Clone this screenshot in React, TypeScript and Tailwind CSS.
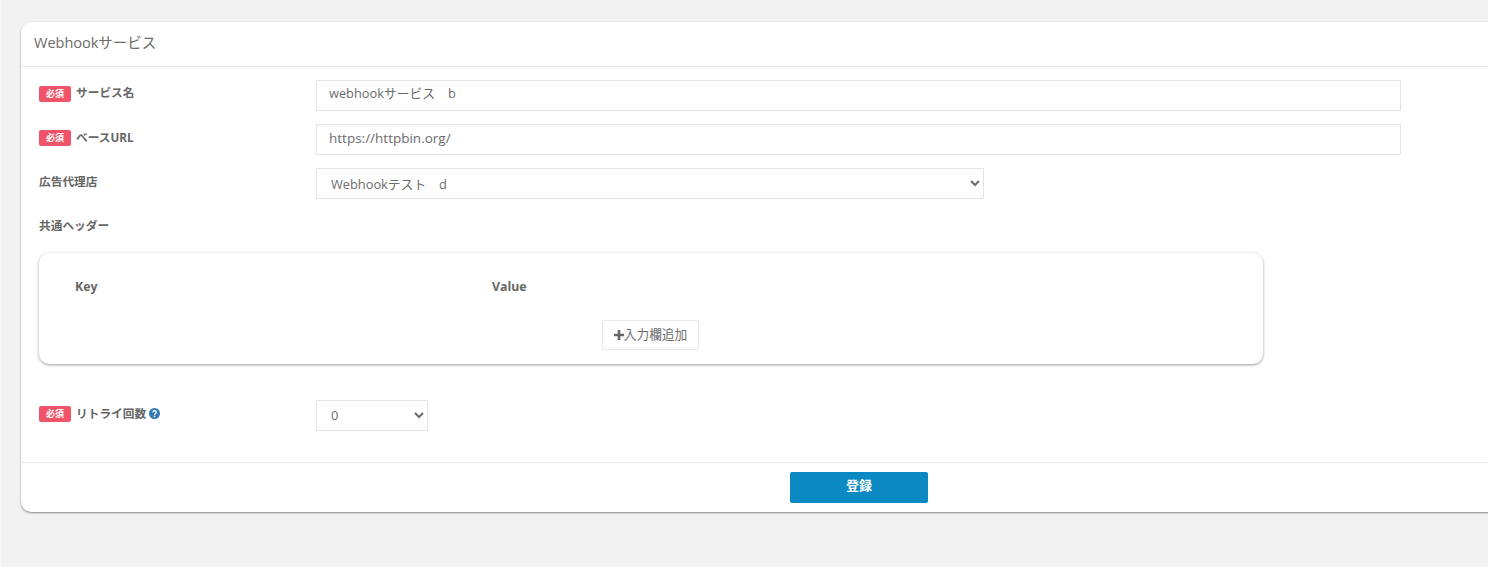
const FONT = "font-['Open_Sans','Noto_Sans_CJK_JP',sans-serif]";

function RequiredBadge() {
  return (
    <span className="inline-flex h-4 w-8 shrink-0 items-center justify-center rounded-[2px] bg-[#f15469] text-[9px] font-bold leading-none text-white">
      必須
    </span>
  );
}

function Label({ required, children }: { required?: boolean; children: React.ReactNode }) {
  return (
    <div className="flex h-[27px] w-[277px] shrink-0 items-center gap-[5px] text-[11.7px] font-bold text-[#666666]">
      {required ? <RequiredBadge /> : null}
      {children}
    </div>
  );
}

function TextField({ value, className }: { value: string; className: string }) {
  return (
    <input
      readOnly
      value={value}
      className={`h-[31px] w-[1085px] border border-[#e4e4e4] bg-white px-3 text-[#6b6b6b] outline-none ${className}`}
    />
  );
}

export default function App() {
  return (
    <div className={`h-[567px] w-[1488px] overflow-hidden border-l border-[#f8f8f8] bg-[#f2f2f2] pl-[20px] pt-[22px] ${FONT}`}>
      <div className="w-[1500px] rounded-l-[10px] bg-white shadow-[0_1px_2px_rgba(0,0,0,0.45)]">
        <div className="flex h-[45px] items-center border-b border-[#e8e8e8] pb-[3px] pl-[13px] text-[14.5px] text-[#6b6b6b]">
          Webhookサービス
        </div>

        <div className="flex flex-col pl-[18px] pt-[13px]">
          <div className="flex h-[44px] items-start">
            <Label required>
              <span className="-mt-[1px]">サービス名</span>
            </Label>
            <TextField value="webhookサービス　b" className="pb-[6px] text-[12.8px]" />
          </div>
          <div className="flex h-[44px] items-start">
            <Label required>ベースURL</Label>
            <TextField value="https://httpbin.org/" className="pb-[3px] text-[13.5px]" />
          </div>
          <div className="flex h-[44px] items-start">
            <Label>広告代理店</Label>
            <select className="h-[31px] w-[668px] border border-[#e4e4e4] bg-white px-[10px] text-[12.8px] text-[#6b6b6b] outline-none">
              <option>Webhookテスト　d</option>
            </select>
          </div>
          <Label>共通ヘッダー</Label>

          <div className="mt-[14px] w-[1224px] rounded-[10px] bg-white shadow-[0_1px_3px_rgba(0,0,0,0.4)]">
            <div className="flex h-[67px] items-end pb-[24px] pl-[36px] text-[12.3px] font-bold text-[#666666]">
              <span className="w-[417px]">Key</span>
              <span>Value</span>
            </div>
            <div className="flex h-[44px] justify-start pl-[563px]">
              <button
                type="button"
                className="flex h-[30px] w-[97px] items-center justify-center rounded-[2px] border border-[#e8e8e8] bg-white text-[12.7px] text-[#6b6b6b]"
              >
                <svg viewBox="0 0 10 10" className="h-[10px] w-[10px]" fill="#666666">
                  <path d="M3.7 0h2.6v3.7H10v2.6H6.3V10H3.7V6.3H0V3.7h3.7z" />
                </svg>
                入力欄追加
              </button>
            </div>
          </div>

          <div className="mt-[36px] flex h-[62px] items-start">
            <Label required>
              <span className="flex items-center gap-[3px]">
                リトライ回数
                <svg viewBox="0 0 24 24" className="h-[11px] w-[11px]">
                  <circle cx="12" cy="12" r="12" fill="#337ab7" />
                  <path
                    d="M8.5 9.5a3.5 3.5 0 1 1 5.3 3c-1.2.7-1.8 1.2-1.8 2.5"
                    fill="none"
                    stroke="#ffffff"
                    strokeWidth="3"
                  />
                  <rect x="10.4" y="16.8" width="3.2" height="3.2" fill="#ffffff" />
                </svg>
              </span>
            </Label>
            <select className="h-[31px] w-[112px] border border-[#e4e4e4] bg-white px-[10px] pb-[2px] text-[12.8px] text-[#6b6b6b] outline-none">
              <option>0</option>
            </select>
          </div>
        </div>

        <div className="flex h-[50px] items-start border-t border-[#e8e8e8] pl-[769px] pt-[9px]">
          <button
            type="button"
            className="h-[31px] w-[138px] rounded-[2px] bg-[#0b89c2] pb-[3px] text-[13px] font-bold text-white"
          >
            登録
          </button>
        </div>
      </div>
    </div>
  );
}
